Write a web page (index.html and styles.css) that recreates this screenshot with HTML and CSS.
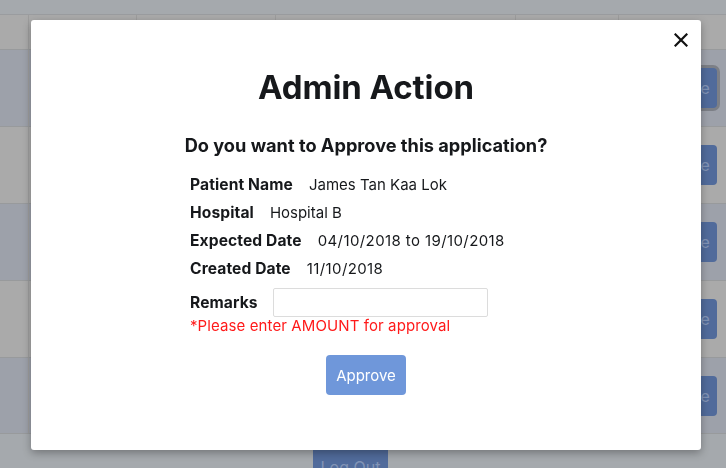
FILE: index.html
```html
<!DOCTYPE html>
<html lang="en">
<head>
<meta charset="utf-8">
<title>Admin Action</title>
<link rel="stylesheet" href="styles.css">
</head>
<body>
<div class="page">
  <div class="topbar"></div>
  <div class="table">
    <div class="row head">
      <div class="cell c0"></div><div class="cell c1"></div><div class="cell c2"></div><div class="cell c3"></div><div class="cell c4"></div><div class="cell c5"></div>
    </div>
    <div class="row body blue">
      <div class="cell c0"></div><div class="cell c1"></div><div class="cell c2"></div><div class="cell c3"></div><div class="cell c4"></div><div class="cell c5"><span class="tbtn focus">Approve</span></div>
    </div>
    <div class="row body grey">
      <div class="cell c0"></div><div class="cell c1"></div><div class="cell c2"></div><div class="cell c3"></div><div class="cell c4"></div><div class="cell c5"><span class="tbtn">Approve</span></div>
    </div>
    <div class="row body blue">
      <div class="cell c0"></div><div class="cell c1"></div><div class="cell c2"></div><div class="cell c3"></div><div class="cell c4"></div><div class="cell c5"><span class="tbtn">Approve</span></div>
    </div>
    <div class="row body grey">
      <div class="cell c0"></div><div class="cell c1"></div><div class="cell c2"></div><div class="cell c3"></div><div class="cell c4"></div><div class="cell c5"><span class="tbtn">Approve</span></div>
    </div>
    <div class="row body blue">
      <div class="cell c0"></div><div class="cell c1"></div><div class="cell c2"></div><div class="cell c3"></div><div class="cell c4"></div><div class="cell c5"><span class="tbtn">Approve</span></div>
    </div>
  </div>
  <div class="footer"><span class="logout">Log Out</span></div>
</div>

<div class="modal">
  <button class="close" aria-label="Close">
    <svg width="14" height="14" viewBox="0 0 14 14"><path d="M1.5 1.5 L12.5 12.5 M12.5 1.5 L1.5 12.5" stroke="#111" stroke-width="2.2" stroke-linecap="square"/></svg>
  </button>
  <h1 class="title">Admin Action</h1>
  <h2 class="question">Do you want to Approve this application?</h2>
  <div class="details">
    <div class="line"><span class="label">Patient Name</span><span class="value">James Tan Kaa Lok</span></div>
    <div class="line"><span class="label">Hospital</span><span class="value">Hospital B</span></div>
    <div class="line"><span class="label">Expected Date</span><span class="value num">04/10/2018 to 19/10/2018</span></div>
    <div class="line"><span class="label">Created Date</span><span class="value num">11/10/2018</span></div>
    <div class="line remarks"><span class="label">Remarks</span><input class="input" type="text"></div>
    <div class="error">*Please enter AMOUNT for approval</div>
  </div>
  <div class="actions"><button class="approve">Approve</button></div>
</div>
</body>
</html>
```
FILE: styles.css
```css
* { box-sizing: border-box; }
html, body { margin: 0; padding: 0; }
body {
  width: 726px;
  height: 468px;
  overflow: hidden;
  font-family: Inter, "Liberation Sans", sans-serif;
  background: #a5a9ad;
}
.page { display: flex; flex-direction: column; }
.topbar { height: 15px; background: #a5a9ad; border-bottom: 1px solid #9a9c9f; }
.table { display: flex; flex-direction: column; width: 760px; }
.row { display: flex; }
.row.head { height: 34px; background: #aaaaaa; }
.row.body { height: 77px; border-top: 1px solid #989a9c; }
.row.blue { background: #9da1aa; }
.row.grey { background: #aaaaaa; }
.row.body:last-child { border-bottom: 1px solid #989a9c; }
.cell { border-right: 1px solid #9d9d9d; }
.c0 { width: 29px; }
.c1 { width: 108px; }
.c2 { width: 139px; }
.c3 { width: 240px; }
.c4 { width: 103px; }
.c5 { flex: 1; border-right: 0; display: flex; align-items: center; padding-left: 20px; }
.tbtn {
  display: inline-flex; align-items: center; justify-content: center;
  width: 78px; height: 40px; border-radius: 4px;
  background: #516b9b; color: #8193b5; font-size: 16px;
}
.tbtn.focus { box-shadow: 0 0 0 3px #7c7f86; }
.footer { height: 32px; background: #a5a9ad; display: flex; padding-left: 313px; padding-top: 13px; }
.logout {
  display: inline-flex; justify-content: center; align-items: flex-start;
  width: 75px; height: 40px; background: #516b9b; color: #8193b5;
  font-size: 16px; padding-top: 10px;
}
.modal {
  position: fixed;
  left: 31px; top: 20px;
  width: 670px; height: 430px;
  background: #fff;
  border-radius: 3px;
  box-shadow: 0 3px 8px rgba(0,0,0,0.3);
  display: flex; flex-direction: column; align-items: center;
  color: #16181b;
}
.close {
  position: absolute; right: 12px; top: 12px;
  width: 16px; height: 16px; padding: 0; margin: 0;
  border: 0; background: transparent;
  display: flex; align-items: center; justify-content: center;
}
.title {
  margin: 48px 0 0;
  font-size: 33px; font-weight: 700; line-height: 38px;
  letter-spacing: -0.1px;
}
.question {
  margin: 28px 0 0;
  font-size: 18.2px; font-weight: 700; line-height: 22px;
}
.details {
  align-self: flex-start;
  margin: 14px 0 0 159px;
  display: flex; flex-direction: column;
  font-size: 15px;
}
.line { height: 28px; display: flex; align-items: center; gap: 16px; }
.label { font-weight: 700; font-size: 15.6px; letter-spacing: 0.1px; }
.value { font-weight: 400; }
.value.num { letter-spacing: 0.4px; }
.line.remarks { height: 28px; margin-top: 6px; gap: 15px; }
.input {
  width: 215px; height: 29px;
  border: 1px solid #dcdcdc; border-radius: 2px;
  margin: 0; padding: 0 6px; font: inherit;
}
.error { color: #ff1a1a; line-height: 18px; margin-top: 1px; letter-spacing: 0.1px; }
.actions { margin-top: 20px; }
.approve {
  width: 80px; height: 40px;
  border: 0; border-radius: 4px;
  background: #6f97da; color: #fff;
  font-family: inherit; font-size: 15px;
}
```
